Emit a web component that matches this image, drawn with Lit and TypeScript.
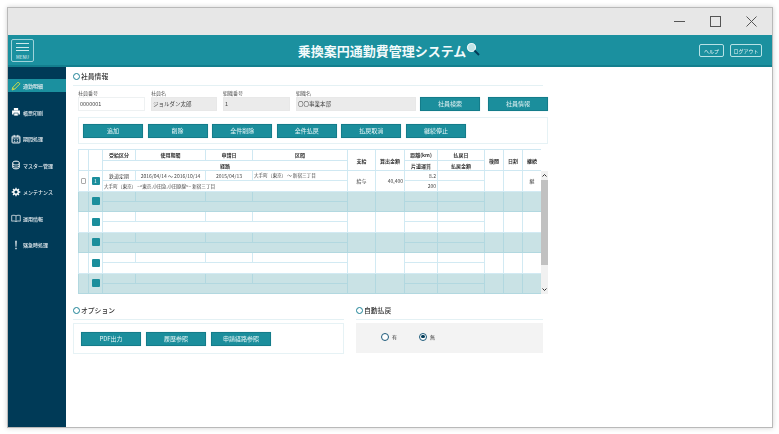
import { LitElement, html, css, svg } from "lit";
import { customElement } from "lit/decorators.js";

const ICONS = [
  svg`<path d="M1.5 12.5 L2.5 9 L10 1.5 L12.5 4 L5 11.5 Z M2.5 9 L5 11.5" fill="none" stroke="#c9dc4a" stroke-width="1.4"/>`,
  svg`<path d="M4 1.5h6v3H4z M1.5 5h11v5.5H1.5z" fill="#fff"/><path d="M4 8.5h6v4H4z" fill="#fff" stroke="#003a57" stroke-width=".8"/>`,
  svg`<rect x="1.5" y="3" width="11" height="9.5" rx="1" fill="none" stroke="#fff" stroke-width="1.4"/><path d="M1.5 5.5h11M4.5 1.2v3M9.5 1.2v3M4 8h2M8 8h2M4 10.3h2M8 10.3h2" stroke="#fff" stroke-width="1.1"/>`,
  svg`<path d="M2.5 3.5C2.5 1 11.5 1 11.5 3.5V10.5C11.5 13 2.5 13 2.5 10.5Z" fill="none" stroke="#fff" stroke-width="1.4"/><path d="M2.5 5.5C4 7.5 10 7.5 11.5 5.5M2.5 8.5C4 10.5 10 10.5 11.5 8.5" fill="none" stroke="#fff" stroke-width="1.1"/>`,
  svg`<circle cx="7" cy="7" r="3.2" fill="none" stroke="#fff" stroke-width="2"/><path d="M7 1v2.5M7 10.5V13M1 7h2.5M10.5 7H13M2.8 2.8l1.8 1.8M9.4 9.4l1.8 1.8M11.2 2.8L9.4 4.6M4.6 9.4l-1.8 1.8" stroke="#fff" stroke-width="1.8"/>`,
  svg`<path d="M7 4C5.5 3 3 3 1 3.5V11.5C3 11 5.5 11 7 12C8.5 11 11 11 13 11.5V3.5C11 3 8.5 3 7 4ZM7 4V12" fill="none" stroke="#fff" stroke-width="1"/>`,
  svg`<path d="M6 1h2L7.6 9.5H6.4ZM6.1 10.8h1.8v2H6.1Z" fill="#fff"/>`,
];

const NAV = ["通勤明細", "帳票印刷", "期間処理", "マスター管理", "メンテナンス", "運用情報", "緊急時処理"];
const TOP_BTNS = ["追加", "削除", "全件削除", "全件払戻", "払戻取消", "継続停止"];
const OPT_BTNS = ["PDF出力", "履歴参照", "申請経路参照"];

@customElement("app-root")
export class AppRoot extends LitElement {
  static styles = css`
    :host {
      display: block;
      width: 779px;
      height: 434px;
      box-sizing: border-box;
      padding: 7px 6px 6px 7px;
      background: #fff;
      overflow: hidden;
      font-family: "Noto Sans CJK JP", "Noto Sans", sans-serif;
      color: #333;
    }
    * { box-sizing: border-box; }
    .window {
      height: 100%;
      display: flex;
      flex-direction: column;
      border: 1px solid #b9b9b9;
      box-shadow: 0 0 5px rgba(0,0,0,.18);
      background: #fff;
      filter: blur(0.22px);
    }
    .titlebar {
      height: 27px;
      background: #e7e7e7;
      display: flex;
      justify-content: flex-end;
      align-items: center;
      flex: none;
      padding-right: 15px;
      gap: 25px;
    }
    .titlebar svg { width: 11px; height: 11px; display: block; }
    .header {
      height: 32px;
      flex: none;
      background: #1b909f;
      border-bottom: 2px solid #137f8e;
      display: flex;
      align-items: center;
      padding: 0 10px 0 3px;
    }
    .menu {
      width: 23px;
      height: 23px;
      border: 1px solid #9fd3da;
      border-radius: 2px;
      display: flex;
      flex-direction: column;
      align-items: center;
      padding-top: 3.5px;
      gap: 2.5px;
      color: #e6f5f6;
      font-size: 4.5px;
      line-height: 4px;
    }
    .menu i { display: block; width: 13px; height: 1px; background: #cfe9ec; }
    .menu span { margin-top: 1px; }
    .brand {
      flex: 1;
      display: flex;
      justify-content: center;
      align-items: center;
      margin-left: 45px;
      font-size: 13px;
      font-weight: 700;
      color: #f2fafb;
      white-space: nowrap;
    }
    .brand svg { width: 14px; height: 14px; margin-top: -2px; }
    .hbtns { display: flex; gap: 6px; }
    .hbtn {
      height: 13px;
      border: 1px solid #b8e2e6;
      border-radius: 2px;
      font-size: 5px;
      line-height: 11px;
      color: #eaf6f7;
      text-align: center;
    }
    .hbtn.a { width: 25px; }
    .hbtn.b { width: 32px; }
    .main { flex: 1; display: flex; min-height: 0; }
    .side {
      width: 58px;
      flex: none;
      background: #003a57;
      padding-top: 12px;
      display: flex;
      flex-direction: column;
      gap: 13.5px;
    }
    .nav {
      height: 13px;
      display: flex;
      align-items: center;
      padding-left: 3px;
      gap: 2px;
      font-size: 5px;
      font-weight: 500;
      color: #e8eef1;
      white-space: nowrap;
    }
    .nav.on { background: #1b909f; }
    .nav svg { width: 10px; height: 10px; flex: none; }
    .content {
      flex: 1;
      padding: 4px 0 0 7px;
    }
    .col { width: 475px; }
    .sec-title {
      display: flex;
      align-items: center;
      gap: 1px;
      font-size: 6.8px;
      font-weight: 500;
      color: #333;
      height: 11px;
      line-height: 11px;
    }
    .sec-title b {
      display: block;
      width: 7px;
      height: 7px;
      border-radius: 50%;
      border: 1.3px solid #1b8094;
    }
    .rule { height: 1px; background: #e4f1f4; margin-top: 3px; }
    .rule.top { width: 470px; }
    .fields {
      display: flex;
      align-items: flex-end;
      padding: 3px 0 0 5px;
      height: 25px;
    }
    .field { display: flex; flex-direction: column; margin-right: 6px; }
    .field label { font-size: 5px; line-height: 8px; color: #555; height: 8px; }
    .input {
      height: 14px;
      border: 1px solid #eef1f2;
      background: #fff;
      font-size: 5.5px;
      line-height: 12px;
      padding-left: 1px;
      color: #444;
      white-space: nowrap;
    }
    .input.ro { background: #ebebeb; border-color: #e8e8e8; }
    .w67 { width: 67px; }
    .w66 { width: 66px; }
    .w120 { width: 120px; }
    .btn {
      width: 60px;
      height: 14px;
      flex: none;
      background: #1b8e9c;
      border: 1px solid #147c8a;
      box-shadow: 0 0 1px #bfe0e4;
      color: #e6f4f5;
      font-size: 6px;
      line-height: 12px;
      text-align: center;
      white-space: nowrap;
    }
    .fields .btn.first { margin-left: -2px; margin-right: 8px; }
    .panel {
      margin: 6px 0 0 5px;
      height: 27px;
      width: 470px;
      border: 1px solid #e6f2f5;
      display: flex;
      align-items: center;
      padding-left: 4px;
      gap: 4.6px;
    }
    .table { margin: 5px 0 0 5px; width: 470px; }
    .grid {
      width: 463px;
      display: grid;
      grid-template-columns: 9px 13px 32px 69px 46px 94px 27px 28px 32px 46px 18px 18px 18px;
      grid-template-rows: 1fr 1fr;
      column-gap: 1px;
      row-gap: 1px;
      padding: 0 0 1px 1px;
      font-size: 5px;
      color: #444;
    }
    .grid > div {
      background: #fff;
      display: flex;
      align-items: center;
      justify-content: center;
      white-space: nowrap;
      min-width: 0;
      line-height: 1;
      overflow: hidden;
    }
    .head { height: 22px; background: #cfe8f2; border-top: 1px solid #cfe8f2; }
    .head > div { font-weight: 700; color: #333; }
    .grid .c1 { grid-area: 1 / 1 / 3 / 2; }
    .grid .c2 { grid-area: 1 / 2 / 3 / 3; }
    .grid .c3 { grid-area: 1 / 3 / 2 / 4; }
    .grid .c4 { grid-area: 1 / 4 / 2 / 5; }
    .grid .c5 { grid-area: 1 / 5 / 2 / 6; }
    .grid .c6 { grid-area: 1 / 6 / 2 / 7; }
    .grid .c7 { grid-area: 1 / 7 / 3 / 8; }
    .grid .c8 { grid-area: 1 / 8 / 3 / 9; }
    .grid .c9 { grid-area: 1 / 9 / 2 / 10; }
    .grid .c10 { grid-area: 1 / 10 / 2 / 11; }
    .grid .c11 { grid-area: 1 / 11 / 3 / 12; }
    .grid .c12 { grid-area: 1 / 12 / 3 / 13; }
    .grid .c13 { grid-area: 1 / 13 / 3 / 14; }
    .grid .route { grid-area: 2 / 3 / 3 / 7; }
    .grid .c9b { grid-area: 2 / 9 / 3 / 10; }
    .grid .c10b { grid-area: 2 / 10 / 3 / 11; }
    .grid .l { justify-content: flex-start; padding-left: 1px; font-size: 4.6px; }
    .grid .r { justify-content: flex-end; padding-right: 1px; }
    .body { display: flex; height: 123px; }
    .rows { display: flex; flex-direction: column; width: 463px; }
    .rows .grid { flex: 1; min-height: 0; }
    .odd { background: #d2eaf3; }
    .even { background: #b2d8e0; }
    .grid.even > div { background: #c9e2e5; }
    .chk { width: 5.5px; height: 5.5px; border: 1px solid #aaa; background: #fff; border-radius: 1px; }
    .sq {
      width: 8px;
      height: 8px;
      background: #1b8e9c;
      border-radius: 1px;
      color: #fff;
      font-size: 5px;
      line-height: 8px;
      text-align: center;
    }
    .scroll {
      width: 7px;
      background: #f1f1f1;
      display: flex;
      flex-direction: column;
      align-items: center;
      justify-content: space-between;
      height: 123px;
    }
    .scroll svg { width: 7px; height: 9px; flex: none; }
    .scroll i { display: block; width: 100%; height: 85px; margin-bottom: 20px; background: #c1c1c1; }
    .bottom { display: flex; margin-top: 11px; gap: 12px; }
    .opt { width: 271px; }
    .auto { width: 187px; }
    .opt .panel {
      margin: 3px 0 0;
      width: 271px;
      height: 31px;
      padding-left: 7px;
      gap: 5px;
    }
    .radios {
      margin-top: 3px;
      height: 30px;
      background: #f3f3f3;
      display: flex;
      align-items: center;
      padding: 0 0 3px 25px;
      gap: 28px;
      font-size: 5px;
    }
    .radio { display: flex; align-items: center; gap: 3px; width: 10px; white-space: nowrap; }
    .radio b {
      flex: none;
      width: 8px;
      height: 8px;
      border: 1.2px solid #1d5a7a;
      border-radius: 50%;
      display: flex;
      align-items: center;
      justify-content: center;
      background: #fff;
    }
    .radio b i { display: block; width: 3.5px; height: 3.5px; background: #003a57; border-radius: 50%; }
  `;

  private dataRow(i: number) {
    const first = i === 0;
    return html`<div class="grid ${i % 2 ? "even" : "odd"}">
      <div class="c1">${first ? html`<span class="chk"></span>` : ""}</div>
      <div class="c2"><span class="sq">${first ? "1" : ""}</span></div>
      <div class="c3">${first ? "鉄道定期" : ""}</div>
      <div class="c4">${first ? "2016/04/14 〜 2016/10/14" : ""}</div>
      <div class="c5">${first ? "2015/04/13" : ""}</div>
      <div class="c6 l">${first ? "大手町（東京） 〜 新宿三丁目" : ""}</div>
      <div class="c7">${first ? "給与" : ""}</div>
      <div class="c8 r">${first ? "40,400" : ""}</div>
      <div class="c9 r">${first ? "8.2" : ""}</div>
      <div class="c10"></div>
      <div class="c11"></div>
      <div class="c12"></div>
      <div class="c13">${first ? "継" : ""}</div>
      <div class="route l">${first ? "大手町（東京） –<東京,小田急,小田原線>– 新宿三丁目" : ""}</div>
      <div class="c9b r">${first ? "200" : ""}</div>
      <div class="c10b"></div>
    </div>`;
  }

  render() {
    return html`<div class="window">
      <div class="titlebar">
        <svg viewBox="0 0 11 11"><path d="M0 5.5h11" stroke="#555" stroke-width="1"/></svg>
        <svg viewBox="0 0 11 11"><rect x=".5" y=".5" width="10" height="10" fill="none" stroke="#555"/></svg>
        <svg viewBox="0 0 11 11"><path d="M.5 .5l10 10M10.5 .5l-10 10" stroke="#555" stroke-width="1"/></svg>
      </div>
      <div class="header">
        <div class="menu"><i></i><i></i><i></i><span>MENU</span></div>
        <div class="brand">乗換案円通勤費管理システム<svg viewBox="0 0 14 14"><circle cx="5.5" cy="5.5" r="4" fill="#bfe3e6" stroke="#eaf6f7" stroke-width="1.2"/><path d="M8.5 8.5L13 13" stroke="#003a57" stroke-width="2"/></svg></div>
        <div class="hbtns"><div class="hbtn a">ヘルプ</div><div class="hbtn b">ログアウト</div></div>
      </div>
      <div class="main">
        <nav class="side">
          ${NAV.map((n, i) => html`<div class="nav ${i === 0 ? "on" : ""}"><svg viewBox="0 0 14 14">${ICONS[i]}</svg>${n}</div>`)}
        </nav>
        <div class="content">
          <div class="col">
            <div class="sec-title"><b></b>社員情報</div>
            <div class="rule top"></div>
            <div class="fields">
              <div class="field"><label>社員番号</label><div class="input w67">0000001</div></div>
              <div class="field"><label>社員名</label><div class="input ro w66">ジョルダン太郎</div></div>
              <div class="field"><label>組織番号</label><div class="input ro w67">1</div></div>
              <div class="field"><label>組織名</label><div class="input ro w120">〇〇事業本部</div></div>
              <div class="btn first">社員検索</div>
              <div class="btn">社員情報</div>
            </div>
            <div class="panel">${TOP_BTNS.map((b) => html`<div class="btn">${b}</div>`)}</div>
            <div class="table">
              <div class="grid head">
                <div class="c1"></div><div class="c2"></div>
                <div class="c3">受給区分</div><div class="c4">使用期間</div><div class="c5">申請日</div><div class="c6">区間</div>
                <div class="c7">支給</div><div class="c8">算出金額</div>
                <div class="c9">距離(km)</div><div class="c10">払戻日</div>
                <div class="c11">検閲</div><div class="c12">日割</div><div class="c13">継続</div>
                <div class="route">経路</div><div class="c9b">片道運賃</div><div class="c10b">払戻金額</div>
              </div>
              <div class="body">
                <div class="rows">${[0, 1, 2, 3, 4, 5].map((i) => this.dataRow(i))}</div>
                <div class="scroll">
                  <svg viewBox="0 0 7 9"><path d="M1.5 5.5L3.5 3.5L5.5 5.5" fill="none" stroke="#333" stroke-width="1"/></svg>
                  <i></i>
                  <svg viewBox="0 0 7 9"><path d="M1.5 3.5L3.5 5.5L5.5 3.5" fill="none" stroke="#333" stroke-width="1"/></svg>
                </div>
              </div>
            </div>
            <div class="bottom">
              <div class="opt">
                <div class="sec-title"><b></b>オプション</div>
                <div class="rule"></div>
                <div class="panel">${OPT_BTNS.map((b) => html`<div class="btn">${b}</div>`)}</div>
              </div>
              <div class="auto">
                <div class="sec-title"><b></b>自動払戻</div>
                <div class="rule"></div>
                <div class="radios">
                  <div class="radio"><b></b>有</div>
                  <div class="radio"><b><i></i></b>無</div>
                </div>
              </div>
            </div>
          </div>
        </div>
      </div>
    </div>`;
  }
}
